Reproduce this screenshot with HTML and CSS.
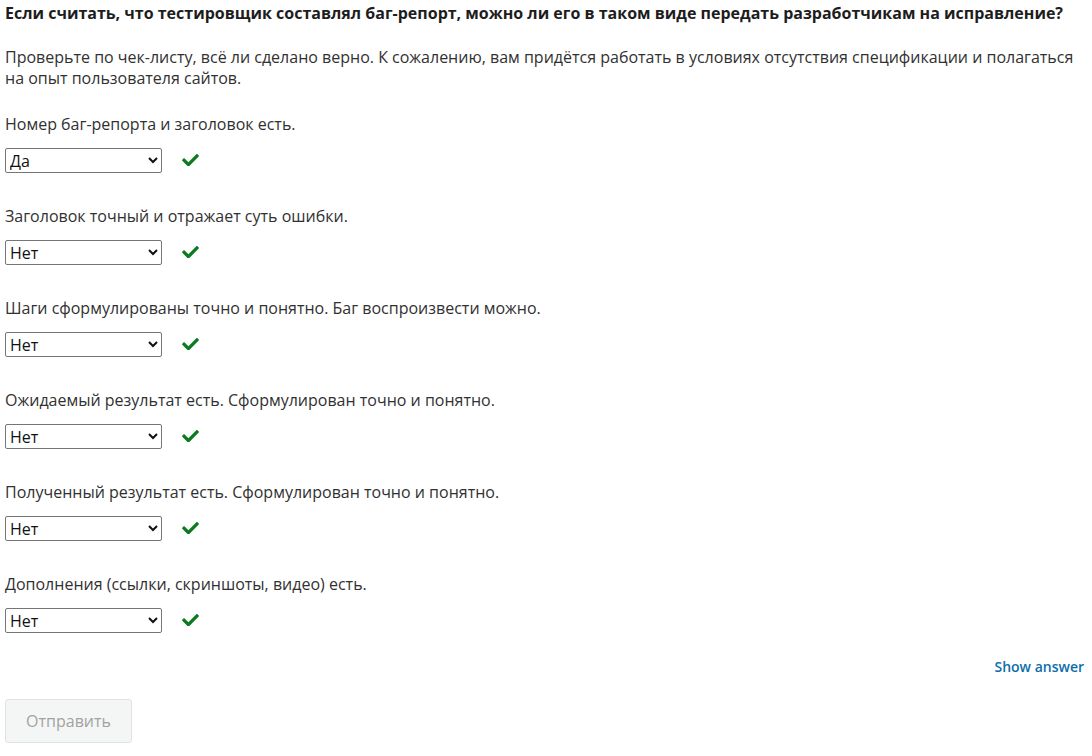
FILE: index.html
```html
<!DOCTYPE html>
<html lang="ru">
<head>
<meta charset="utf-8">
<link rel="stylesheet" href="styles.css">
</head>
<body>
<div class="problem">
  <h3 class="title">Если считать, что тестировщик составлял баг-репорт, можно ли его в таком виде передать разработчикам на исправление?</h3>
  <p class="intro">Проверьте по чек-листу, всё ли сделано верно. К сожалению, вам придётся работать в условиях отсутствия спецификации и полагаться на опыт пользователя сайтов.</p>

  <div class="item">
    <p class="label">Номер баг-репорта и заголовок есть.</p>
    <div class="row">
      <select class="choice"><option>Да</option><option>Нет</option></select>
      <svg class="check" viewBox="0 66 512 378" width="17" height="12.5"><path d="M173.9 439.4l-166.4-166.4c-10-10-10-26.2 0-36.2l36.2-36.2c10-10 26.2-10 36.2 0L192 312.7 432.1 72.6c10-10 26.2-10 36.2 0l36.2 36.2c10 10 10 26.2 0 36.2l-294.4 294.4c-10 10-26.2 10-36.2 0z"/></svg>
    </div>
  </div>

  <div class="item">
    <p class="label">Заголовок точный и отражает суть ошибки.</p>
    <div class="row">
      <select class="choice"><option>Нет</option><option>Да</option></select>
      <svg class="check" viewBox="0 66 512 378" width="17" height="12.5"><path d="M173.9 439.4l-166.4-166.4c-10-10-10-26.2 0-36.2l36.2-36.2c10-10 26.2-10 36.2 0L192 312.7 432.1 72.6c10-10 26.2-10 36.2 0l36.2 36.2c10 10 10 26.2 0 36.2l-294.4 294.4c-10 10-26.2 10-36.2 0z"/></svg>
    </div>
  </div>

  <div class="item">
    <p class="label">Шаги сформулированы точно и понятно. Баг воспроизвести можно.</p>
    <div class="row">
      <select class="choice"><option>Нет</option><option>Да</option></select>
      <svg class="check" viewBox="0 66 512 378" width="17" height="12.5"><path d="M173.9 439.4l-166.4-166.4c-10-10-10-26.2 0-36.2l36.2-36.2c10-10 26.2-10 36.2 0L192 312.7 432.1 72.6c10-10 26.2-10 36.2 0l36.2 36.2c10 10 10 26.2 0 36.2l-294.4 294.4c-10 10-26.2 10-36.2 0z"/></svg>
    </div>
  </div>

  <div class="item">
    <p class="label">Ожидаемый результат есть. Сформулирован точно и понятно.</p>
    <div class="row">
      <select class="choice"><option>Нет</option><option>Да</option></select>
      <svg class="check" viewBox="0 66 512 378" width="17" height="12.5"><path d="M173.9 439.4l-166.4-166.4c-10-10-10-26.2 0-36.2l36.2-36.2c10-10 26.2-10 36.2 0L192 312.7 432.1 72.6c10-10 26.2-10 36.2 0l36.2 36.2c10 10 10 26.2 0 36.2l-294.4 294.4c-10 10-26.2 10-36.2 0z"/></svg>
    </div>
  </div>

  <div class="item">
    <p class="label">Полученный результат есть. Сформулирован точно и понятно.</p>
    <div class="row">
      <select class="choice"><option>Нет</option><option>Да</option></select>
      <svg class="check" viewBox="0 66 512 378" width="17" height="12.5"><path d="M173.9 439.4l-166.4-166.4c-10-10-10-26.2 0-36.2l36.2-36.2c10-10 26.2-10 36.2 0L192 312.7 432.1 72.6c10-10 26.2-10 36.2 0l36.2 36.2c10 10 10 26.2 0 36.2l-294.4 294.4c-10 10-26.2 10-36.2 0z"/></svg>
    </div>
  </div>

  <div class="item">
    <p class="label">Дополнения (ссылки, скриншоты, видео) есть.</p>
    <div class="row">
      <select class="choice"><option>Нет</option><option>Да</option></select>
      <svg class="check" viewBox="0 66 512 378" width="17" height="12.5"><path d="M173.9 439.4l-166.4-166.4c-10-10-10-26.2 0-36.2l36.2-36.2c10-10 26.2-10 36.2 0L192 312.7 432.1 72.6c10-10 26.2-10 36.2 0l36.2 36.2c10 10 10 26.2 0 36.2l-294.4 294.4c-10 10-26.2 10-36.2 0z"/></svg>
    </div>
  </div>

  <div class="actions">
    <a class="show" href="#">Show answer</a>
  </div>
  <button class="submit" disabled>Отправить</button>
</div>
</body>
</html>
```
FILE: styles.css
```css
html, body {
  margin: 0;
  padding: 0;
  background: #fff;
}
body {
  font-family: "Open Sans", "Noto Sans", sans-serif;
  color: #313131;
  font-size: 16px;
  line-height: 21px;
}
.problem {
  padding: 3px 5px 0 5px;
}
.title {
  margin: 0;
  font-size: 16px;
  font-weight: 700;
  line-height: 21px;
  color: #1d1d1d;
}
.intro {
  margin: 23px 0 0 0;
  color: #313131;
}
.item {
  margin-top: 25px;
}
.item + .item {
  margin-top: 33px;
}
.label {
  margin: 0;
}
.row {
  display: flex;
  align-items: center;
  gap: 20px;
  margin-top: 13px;
}
.choice {
  width: 157px;
  height: 25px;
  margin: 0;
  font-family: "Open Sans", "Noto Sans", sans-serif;
  font-size: 16px;
  color: #111;
  border: 1px solid #767676;
  border-radius: 2px;
  background: #fff;
}
.check {
  display: block;
  fill: #0b7a22;
  margin-top: -1px;
}
.actions {
  display: flex;
  justify-content: flex-end;
  margin-top: 23px;
  padding-right: 3px;
}
.show {
  color: #0c6eac;
  font-weight: 600;
  font-size: 14px;
  text-decoration: none;
}
.submit {
  margin-top: 22px;
  width: 127px;
  height: 44px;
  font-family: "Open Sans", "Noto Sans", sans-serif;
  font-size: 16px;
  color: #a2a2a2;
  background: #f4f6f6;
  border: 1px solid #e1e3e3;
  border-radius: 3px;
}
```
